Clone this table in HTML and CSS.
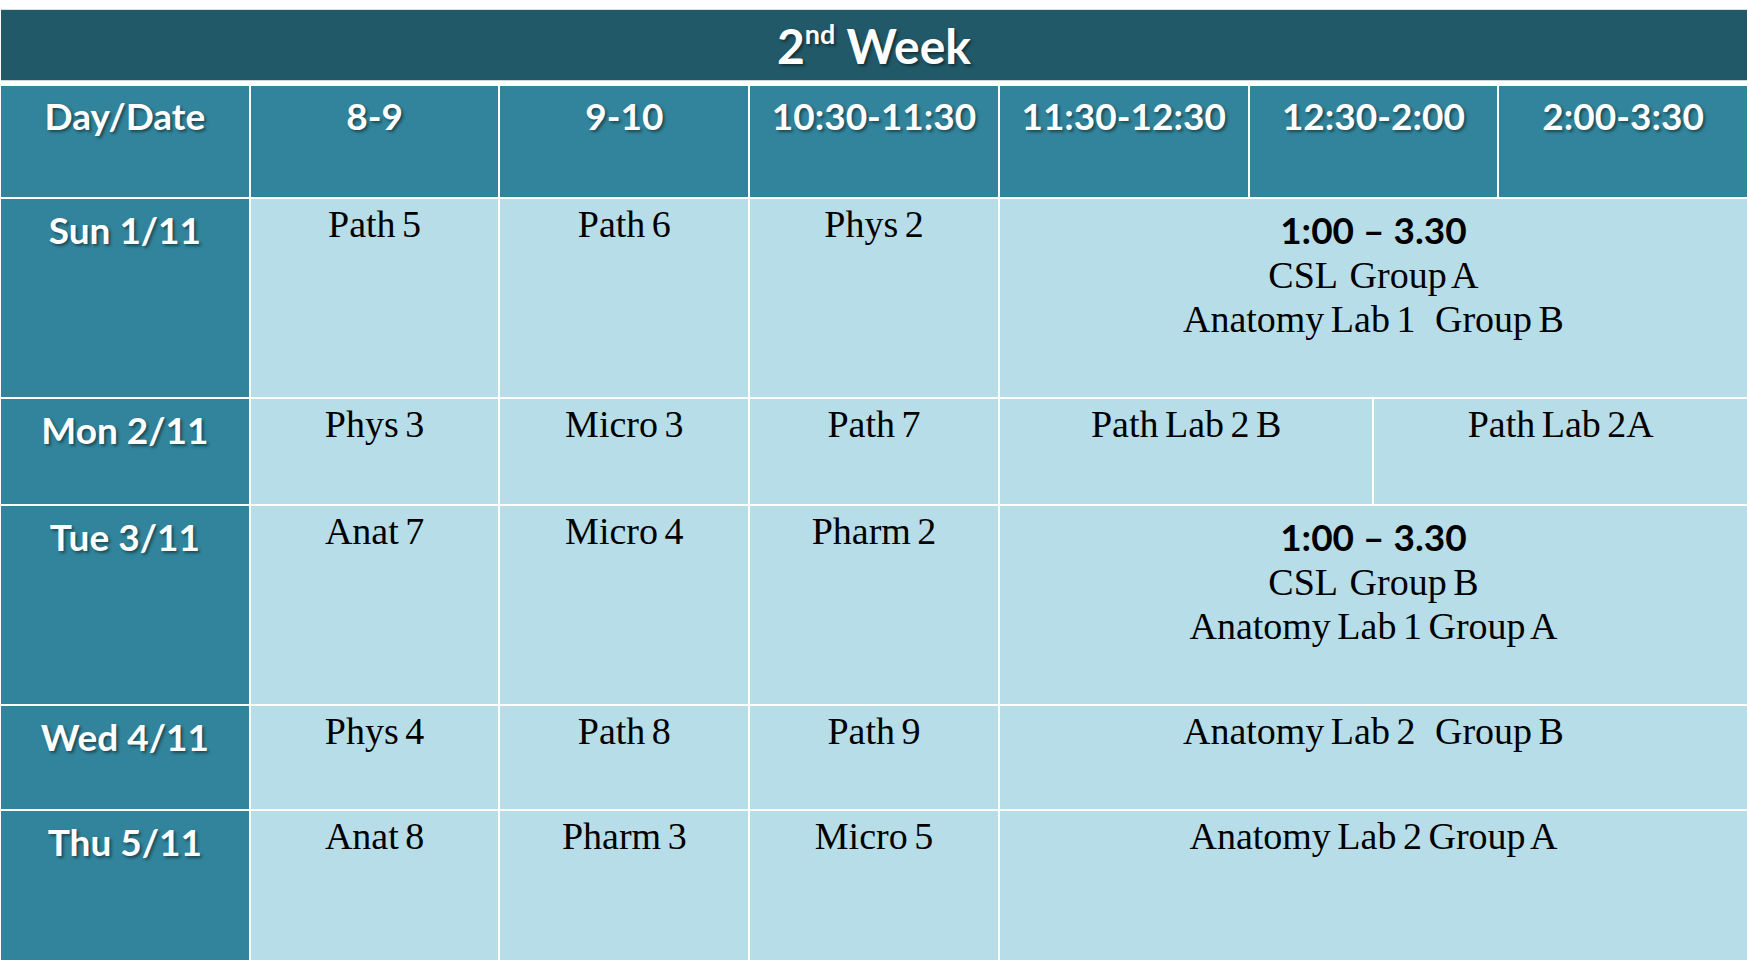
FILE: index.html
```html
<!DOCTYPE html>
<html lang="en">
<head>
<meta charset="utf-8">
<title>2nd Week Timetable</title>
<link rel="stylesheet" href="styles.css">
</head>
<body>
<div class="page">
  <div class="title-band"><span class="title">2<span class="sup">nd</span> Week</span></div>
  <div class="timetable">
    <div class="cell head">Day/Date</div>
    <div class="cell head">8-9</div>
    <div class="cell head">9-10</div>
    <div class="cell head">10:30-11:30</div>
    <div class="cell head">11:30-12:30</div>
    <div class="cell head">12:30-2:00</div>
    <div class="cell head">2:00-3:30</div>

    <div class="cell day">Sun 1/11</div>
    <div class="cell body">Path 5</div>
    <div class="cell body">Path 6</div>
    <div class="cell body">Phys 2</div>
    <div class="cell body span3"><span class="time">1:00 – 3.30</span>
<span>CSL  Group A</span>
<span>Anatomy Lab 1   Group B</span></div>

    <div class="cell day">Mon 2/11</div>
    <div class="cell body">Phys 3</div>
    <div class="cell body">Micro 3</div>
    <div class="cell body">Path 7</div>
    <div class="split span3">
      <div class="cell body">Path Lab 2 B</div>
      <div class="cell body">Path Lab 2A</div>
    </div>

    <div class="cell day">Tue 3/11</div>
    <div class="cell body">Anat 7</div>
    <div class="cell body">Micro 4</div>
    <div class="cell body">Pharm 2</div>
    <div class="cell body span3"><span class="time">1:00 – 3.30</span>
<span>CSL  Group B</span>
<span>Anatomy Lab 1 Group A</span></div>

    <div class="cell day">Wed 4/11</div>
    <div class="cell body">Phys 4</div>
    <div class="cell body">Path 8</div>
    <div class="cell body">Path 9</div>
    <div class="cell body span3">Anatomy Lab 2   Group B</div>

    <div class="cell day">Thu 5/11</div>
    <div class="cell body">Anat 8</div>
    <div class="cell body">Pharm 3</div>
    <div class="cell body">Micro 5</div>
    <div class="cell body span3">Anatomy Lab 2 Group A</div>
  </div>
</div>
</body>
</html>
```

FILE: styles.css
```css
html, body {
  margin: 0;
  padding: 0;
  background: #ffffff;
  overflow: hidden;
}

.page {
  width: 1746px;
  margin-left: 1px;
  padding-top: 9px;
}

.title-band {
  height: 70px;
  background: #215968;
  border-top: 1px solid #d3e0e4;
  border-bottom: 1px solid #c9d8dc;
  margin-bottom: 5px;
  display: flex;
  align-items: center;
  justify-content: center;
}

.title {
  font-family: Lato, "Liberation Sans", sans-serif;
  font-weight: 700;
  font-size: 48px;
  color: #ffffff;
  text-shadow: 2px 2px 3px rgba(0, 0, 0, 0.45);
  line-height: 56px;
  padding-top: 2px;
}

.sup {
  font-size: 0.56em;
  vertical-align: 0.75em;
  line-height: 0;
}

.timetable {
  display: grid;
  grid-template-columns: repeat(7, 1fr);
  grid-template-rows: 111px 198px 105px 198px 103px 149px;
  gap: 2px;
  background: #ffffff;
}

.cell {
  text-align: center;
  box-sizing: border-box;
}

.head,
.day {
  background: #31849b;
  color: #ffffff;
  font-family: Lato, "Liberation Sans", sans-serif;
  font-weight: 700;
  font-size: 37px;
  line-height: 44px;
  padding-top: 9px;
  text-shadow: 2px 2px 3px rgba(0, 0, 0, 0.45);
}

.head {
  padding-top: 8px;
}

.body {
  background: #b7dde8;
  color: #000000;
  font-family: "Liberation Serif", "Times New Roman", serif;
  font-size: 38px;
  line-height: 44px;
  padding-top: 3px;
  white-space: pre-wrap;
  word-spacing: -3px;
}

.span3 {
  grid-column: span 3;
}

.time {
  font-family: Lato, "Liberation Sans", sans-serif;
  font-weight: 700;
  font-size: 37px;
  word-spacing: 0;
  display: inline-block;
  padding-top: 6px;
}

.split {
  display: grid;
  grid-template-columns: 1fr 1fr;
  gap: 2px;
}
```
